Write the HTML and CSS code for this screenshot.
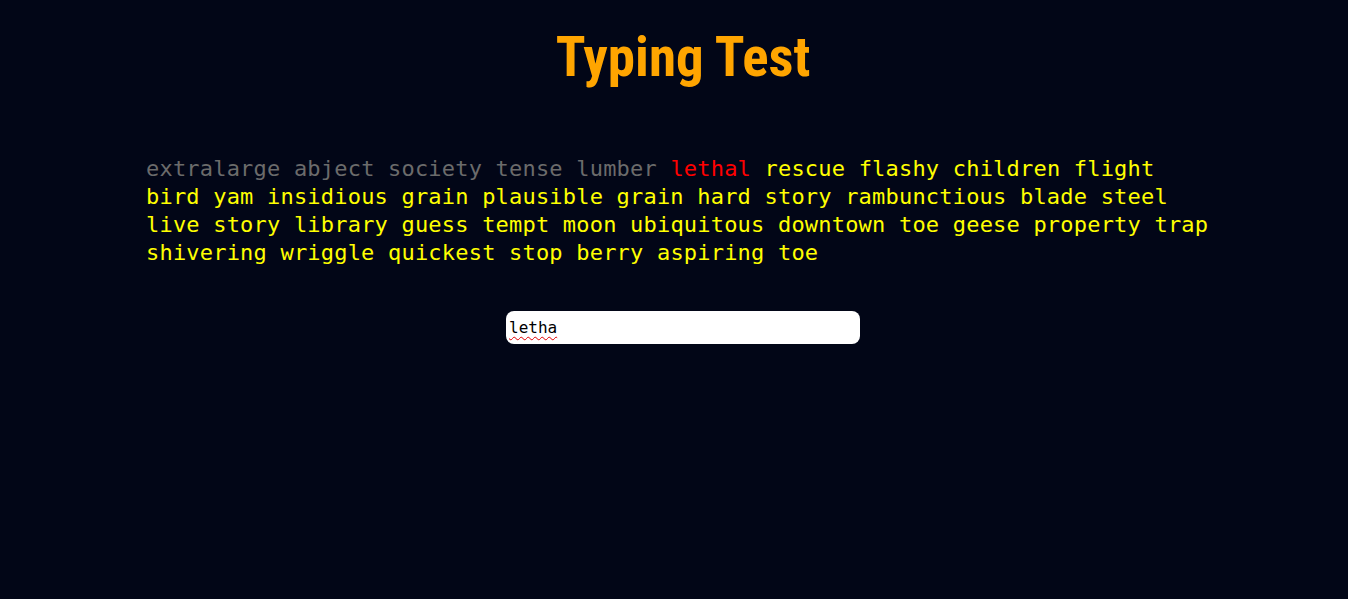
FILE: index.html
```html
<!DOCTYPE html>
<html>
<head>
<meta charset="utf-8">
<link rel="stylesheet" href="styles.css">
</head>
<body>
<main class="app">
  <h1 class="title">Typing Test</h1>
  <div class="words">
    <span class="done">extralarge </span><span class="done">abject </span><span class="done">society </span><span class="done">tense </span><span class="done">lumber </span><span class="wrong">lethal </span><span class="todo">rescue </span><span class="todo">flashy </span><span class="todo">children </span><span class="todo">flight </span><span class="todo">bird </span><span class="todo">yam </span><span class="todo">insidious </span><span class="todo">grain </span><span class="todo">plausible </span><span class="todo">grain </span><span class="todo">hard </span><span class="todo">story </span><span class="todo">rambunctious </span><span class="todo">blade </span><span class="todo">steel </span><span class="todo">live </span><span class="todo">story </span><span class="todo">library </span><span class="todo">guess </span><span class="todo">tempt </span><span class="todo">moon </span><span class="todo">ubiquitous </span><span class="todo">downtown </span><span class="todo">toe </span><span class="todo">geese </span><span class="todo">property </span><span class="todo">trap </span><span class="todo">shivering </span><span class="todo">wriggle </span><span class="todo">quickest </span><span class="todo">stop </span><span class="todo">berry </span><span class="todo">aspiring </span><span class="todo">toe</span>
  </div>
  <div class="input-row">
    <div class="typing-input"><span class="typed">letha</span></div>
  </div>
</main>
</body>
</html>
```
FILE: styles.css
```css
html, body {
  margin: 0;
  padding: 0;
  background: #020617;
  height: 100%;
}
.app {
  display: flex;
  flex-direction: column;
  align-items: stretch;
  padding-left: 18px;
}
.title {
  margin: 25px 0 0;
  text-align: center;
  font-family: "Roboto Condensed", Roboto, sans-serif;
  font-weight: 700;
  font-size: 55px;
  line-height: 65px;
  color: #ffa500;
  letter-spacing: 0;
}
.words {
  margin: 65px 0 0 128px;
  width: 1072px;
  font-family: "DejaVu Sans Mono", monospace;
  font-size: 22px;
  letter-spacing: 0.2px;
  line-height: 28px;
  color: #ffff00;
}
.done { color: #6b6b6b; }
.wrong { color: #ff0000; }
.todo { color: #ffff00; }
.input-row {
  display: flex;
  justify-content: center;
  margin-top: 44px;
}
.typing-input {
  width: 354px;
  height: 33px;
  box-sizing: border-box;
  background: #ffffff;
  border-radius: 8px;
  padding: 0 3px;
  display: flex;
  align-items: center;
  font-family: "DejaVu Sans Mono", monospace;
  font-size: 16px;
  color: #000;
}
.typed {
  text-decoration: underline wavy #e00000;
  text-decoration-thickness: 1px;
  text-underline-offset: 3px;
}
```
